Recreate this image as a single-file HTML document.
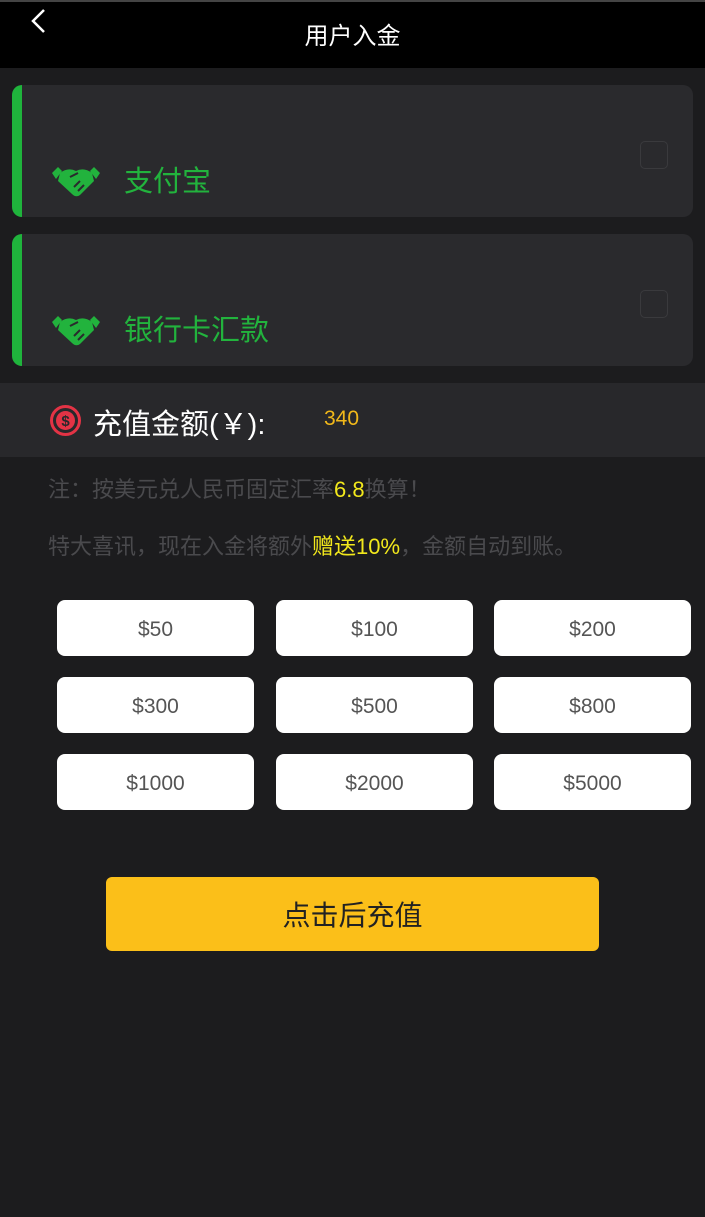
<!DOCTYPE html>
<html><head><meta charset="utf-8"><style>
*{margin:0;padding:0;box-sizing:border-box}
body{width:705px;height:1217px;background:#1c1c1e;font-family:"Liberation Sans","Noto Sans CJK SC",sans-serif;position:relative;overflow:hidden}
.hdr{position:absolute;left:0;top:0;width:705px;height:68px;background:#000;border-top:2px solid #444}
.hdr .t{position:absolute;left:0;right:0;top:14px;text-align:center;color:#fff;font-size:24px}
.back{position:absolute;left:28px;top:6px}
.card{position:absolute;left:12px;width:681px;height:132px;background:#2a2a2d;border-radius:10px;overflow:hidden}
.card .bar{position:absolute;left:0;top:0;bottom:0;width:10px;background:#1fb43c}
.card .lbl{position:absolute;left:112px;top:73px;color:#22b33d;font-size:29px}
.card .ic{position:absolute;left:38px;top:78px}
.card .cb{position:absolute;right:25px;top:56px;width:28px;height:28px;border:1.5px solid #3a3a3d;border-radius:5px}
.amt{position:absolute;left:0;top:383px;width:705px;height:74px;background:#28282b}
.note{position:absolute;left:48px;color:#4a4a4d;font-size:22px}
.y{color:#f2e81c}
.btn{position:absolute;width:197px;height:56px;background:#fff;border-radius:8px;color:#555;font-size:21px;text-align:center;line-height:60px}
.go{position:absolute;left:106px;top:877px;width:493px;height:74px;background:#fbbf19;border-radius:6px;text-align:center;line-height:78px;font-size:28px;color:#222}
</style></head><body>
<div class="hdr">
<svg class="back" width="22" height="30" viewBox="0 0 22 30"><path d="M16 2 L5 13 L16 24" stroke="#fff" stroke-width="2.5" fill="none"/></svg>
<div class="t">用户入金</div></div>

<div class="card" style="top:85px"><div class="bar"></div>
<svg class="ic" width="52" height="36" viewBox="0 0 52 36"><path d="M2 10 L8 4 L12 8 L6 16Z M50 10 L44 4 L40 8 L46 16Z" fill="#22b33d"/><path d="M10 10 Q18 4 26 8 Q34 4 42 10 L44 18 L30 32 Q26 35 22 31 L8 18Z" fill="#22b33d"/><path d="M20 14 L28 10 M24 24 L30 18 M28 28 L34 22" stroke="#2a2a2d" stroke-width="2"/></svg>
<div class="lbl">支付宝</div><div class="cb"></div></div>

<div class="card" style="top:234px"><div class="bar"></div>
<svg class="ic" width="52" height="36" viewBox="0 0 52 36"><path d="M2 10 L8 4 L12 8 L6 16Z M50 10 L44 4 L40 8 L46 16Z" fill="#22b33d"/><path d="M10 10 Q18 4 26 8 Q34 4 42 10 L44 18 L30 32 Q26 35 22 31 L8 18Z" fill="#22b33d"/><path d="M20 14 L28 10 M24 24 L30 18 M28 28 L34 22" stroke="#2a2a2d" stroke-width="2"/></svg>
<div class="lbl">银行卡汇款</div><div class="cb"></div></div>

<div class="amt">
<svg style="position:absolute;left:49px;top:21px" width="33" height="33" viewBox="0 0 33 33"><circle cx="16.5" cy="16.5" r="14" stroke="#e33345" stroke-width="3" fill="none"/><circle cx="16.5" cy="16.5" r="9.5" fill="#e33345"/><text x="16.5" y="22" text-anchor="middle" font-size="15" font-weight="bold" fill="#28282b" font-family="Liberation Sans">$</text></svg>
<div style="position:absolute;left:93px;top:18px;color:#fff;font-size:29px">充值金额(￥):</div>
<div style="position:absolute;left:324px;top:24px;color:#f1b81a;font-size:21px">340</div>
</div>

<div class="note" style="top:472px">注：按美元兑人民币固定汇率<span class="y">6.8</span>换算！</div>
<div class="note" style="top:529px">特大喜讯，现在入金将额外<span class="y">赠送10%</span>，金额自动到账。</div>

<div class="btn" style="left:57px;top:600px">$50</div>
<div class="btn" style="left:276px;top:600px">$100</div>
<div class="btn" style="left:494px;top:600px">$200</div>
<div class="btn" style="left:57px;top:677px">$300</div>
<div class="btn" style="left:276px;top:677px">$500</div>
<div class="btn" style="left:494px;top:677px">$800</div>
<div class="btn" style="left:57px;top:754px">$1000</div>
<div class="btn" style="left:276px;top:754px">$2000</div>
<div class="btn" style="left:494px;top:754px">$5000</div>

<div class="go">点击后充值</div>
</body></html>
